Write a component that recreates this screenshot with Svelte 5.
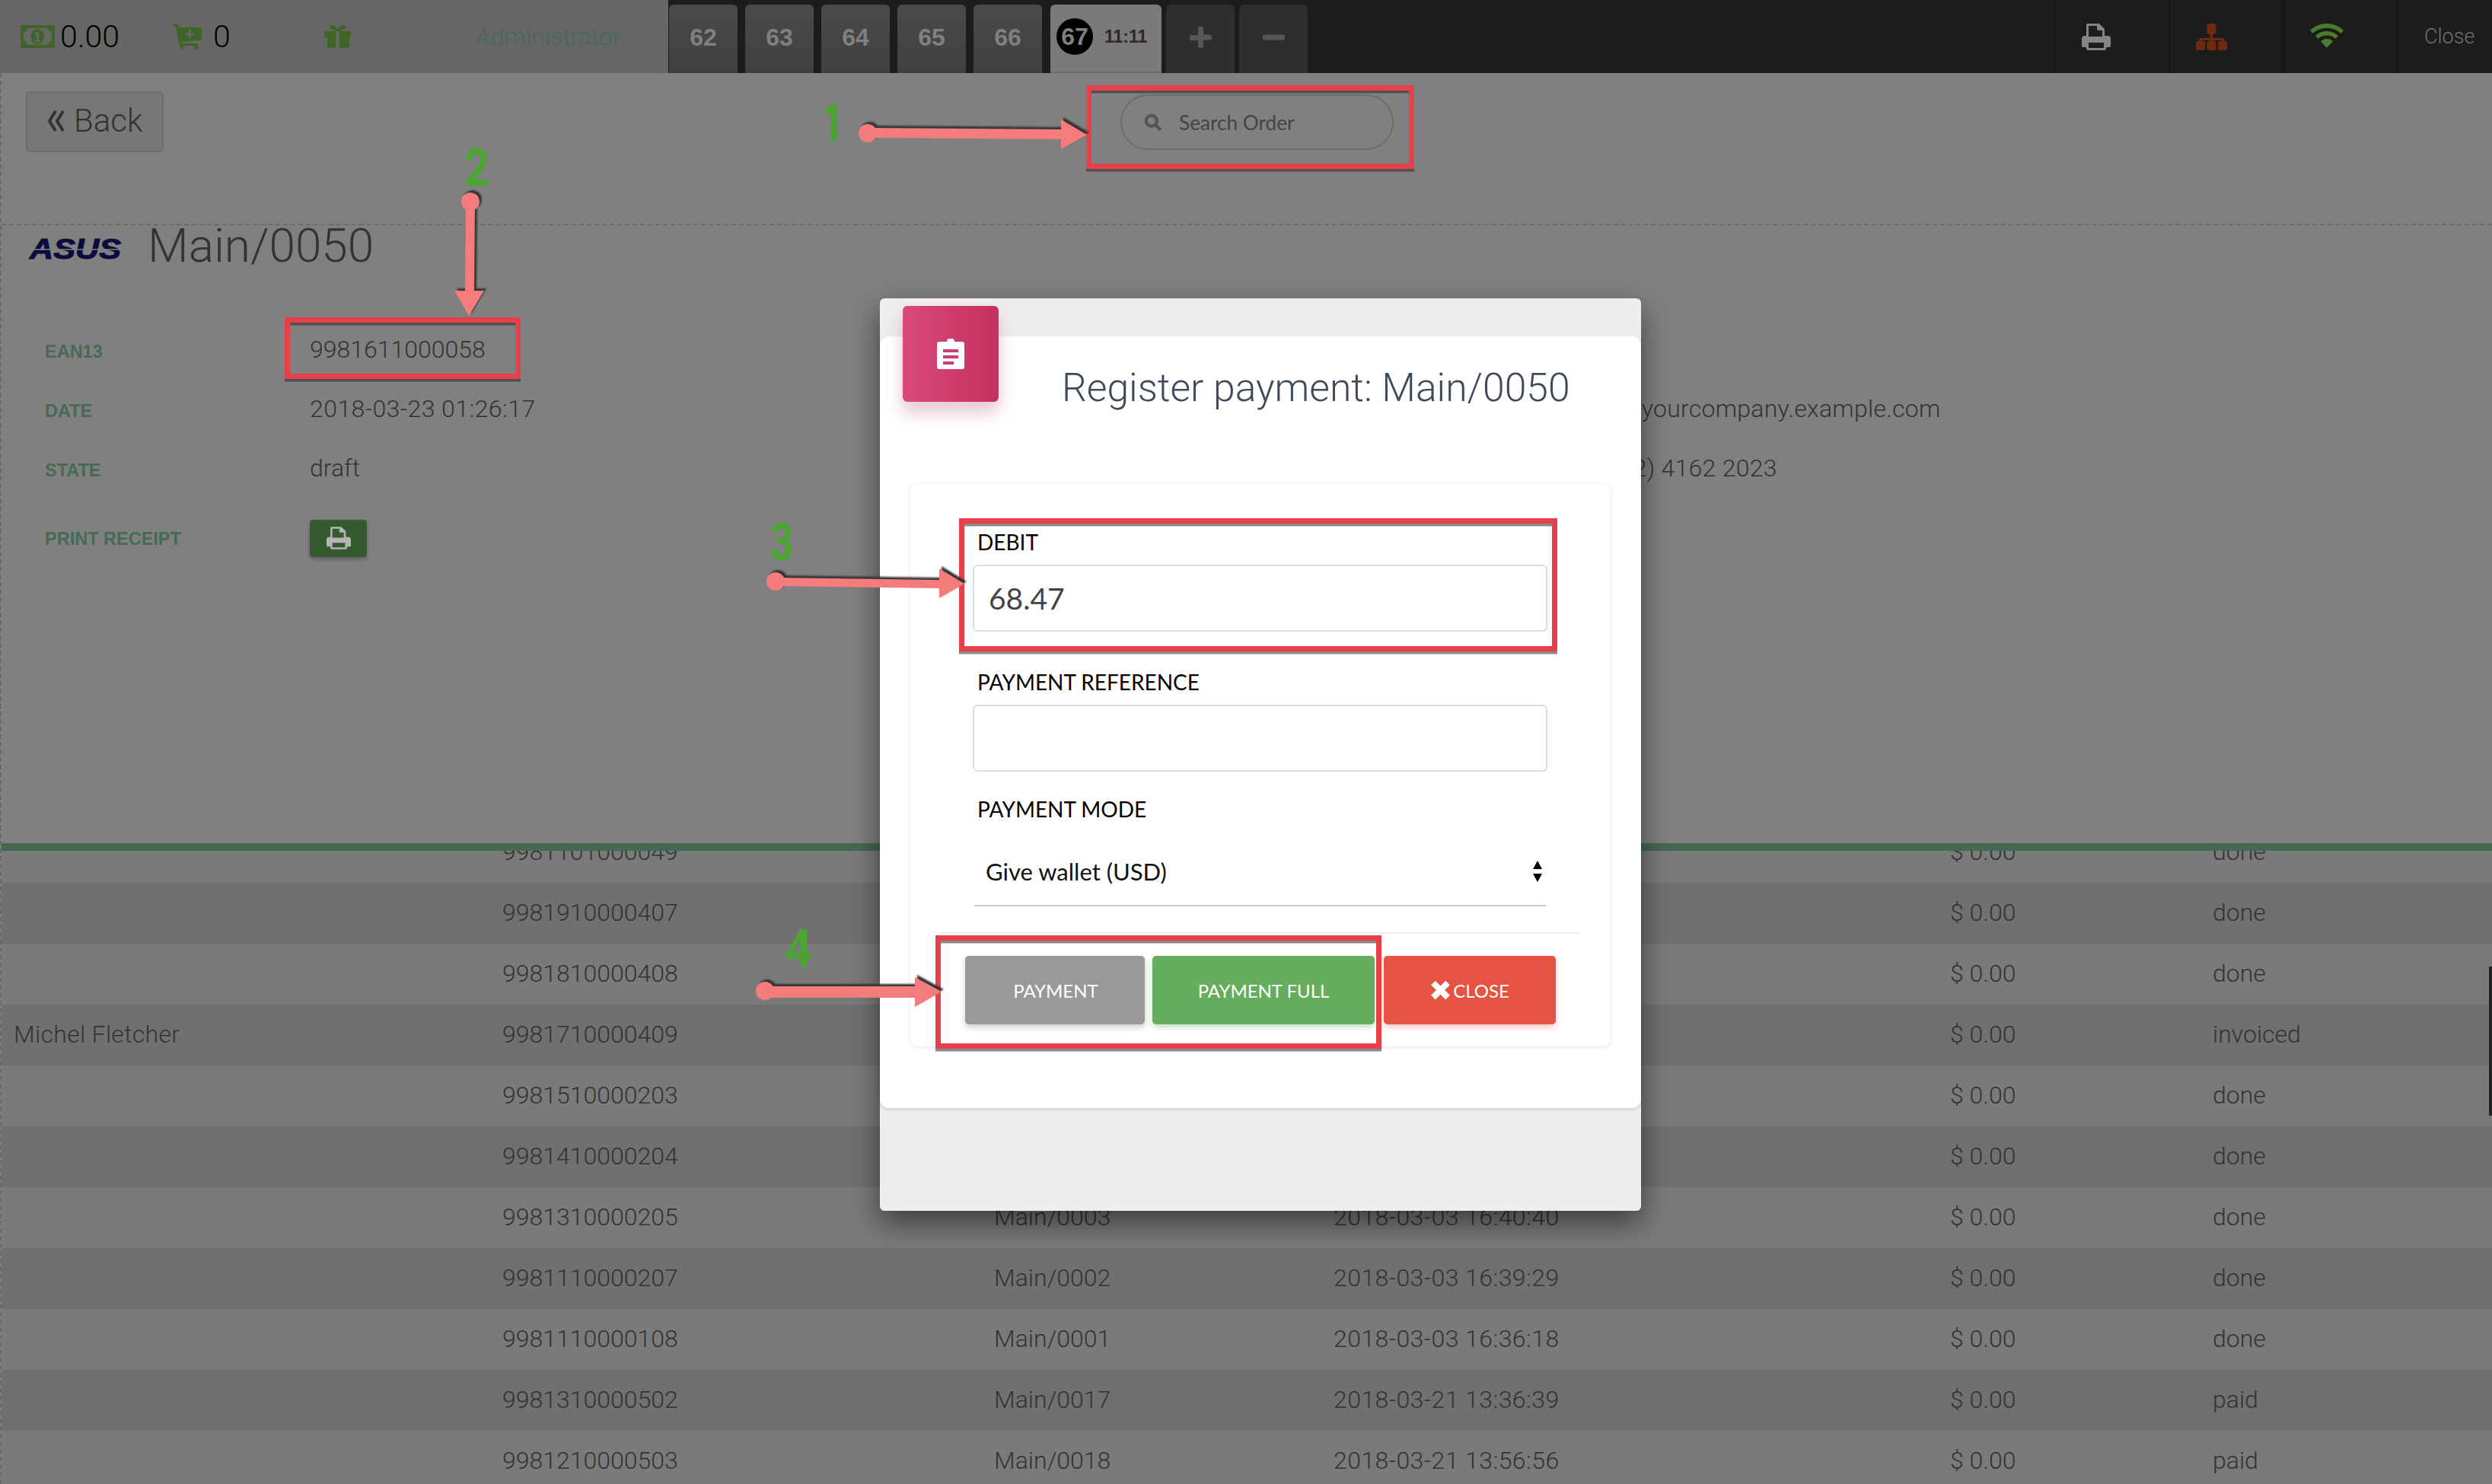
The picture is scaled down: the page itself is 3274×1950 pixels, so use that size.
<script lang="ts">
  interface Row {
    name: string;
    ean: string;
    ref: string;
    date: string;
    state: string;
  }

  const tabs = ["62", "63", "64", "65", "66"];

  const details = [
    { label: "EAN13", value: "9981611000058", extra: "" },
    { label: "DATE", value: "2018-03-23 01:26:17", extra: "info@yourcompany.example.com" },
    { label: "STATE", value: "draft", extra: "+32 (2) 4162 2023" }
  ];

  const rows: Row[] = [
    { name: "", ean: "9981101000049", ref: "", date: "", state: "done" },
    { name: "", ean: "9981910000407", ref: "", date: "", state: "done" },
    { name: "", ean: "9981810000408", ref: "", date: "", state: "done" },
    { name: "Michel Fletcher", ean: "9981710000409", ref: "", date: "", state: "invoiced" },
    { name: "", ean: "9981510000203", ref: "", date: "", state: "done" },
    { name: "", ean: "9981410000204", ref: "", date: "", state: "done" },
    { name: "", ean: "9981310000205", ref: "Main/0003", date: "2018-03-03 16:40:40", state: "done" },
    { name: "", ean: "9981110000207", ref: "Main/0002", date: "2018-03-03 16:39:29", state: "done" },
    { name: "", ean: "9981110000108", ref: "Main/0001", date: "2018-03-03 16:36:18", state: "done" },
    { name: "", ean: "9981310000502", ref: "Main/0017", date: "2018-03-21 13:36:39", state: "paid" },
    { name: "", ean: "9981210000503", ref: "Main/0018", date: "2018-03-21 13:56:56", state: "paid" }
  ];

  // red highlight frames, outer box in page pixels
  const frames = [
    { x: 1427, y: 112, w: 431, h: 110 },
    { x: 374, y: 417, w: 310, h: 81 },
    { x: 1260, y: 681, w: 786, h: 175 },
    { x: 1229, y: 1229, w: 586, h: 149 }
  ];

  const arrows = [
    { cx: 1140, cy: 175, points: "1140,168 1394,170 1394,157 1428,177 1394,196 1394,183 1140,181" },
    { cx: 618, cy: 265, points: "612,265 624,265 623,382 636,382 616,415 597,382 611,382" },
    { cx: 1019, cy: 764, points: "1019,759 1234,762 1234,747 1267,767 1234,786 1234,773 1019,770" },
    { cx: 1005, cy: 1302, points: "1005,1296 1202,1296 1202,1284 1237,1303 1202,1323 1202,1311 1005,1311" }
  ];

  const marks = [
    { text: "1", x: 1080, y: 185, w: 28 },
    { text: "2", x: 610, y: 244, w: 33 },
    { text: "3", x: 1012, y: 736, w: 30 },
    { text: "4", x: 1031, y: 1270, w: 36 }
  ];
</script>

<div class="screen">
  <header class="nav">
    <div class="nav-left">
      <svg class="i-money" viewBox="0 0 45 30" aria-hidden="true">
        <path fill-rule="evenodd" d="M0 0h45v30H0z M9 4a5 5 0 0 1-5 5v12a5 5 0 0 1 5 5h27a5 5 0 0 1 5-5V9a5 5 0 0 1-5-5z" />
        <ellipse cx="22.500" cy="15" rx="9" ry="10" />
        <path d="M20 9h4v11h2v2h-7v-2h2v-7l-2 1v-2z" fill="#666" />
      </svg>
      <span class="balance">0.00</span>
      <svg class="i-cart" viewBox="0 0 38 33" aria-hidden="true">
        <path fill-rule="evenodd" d="M0 0h6a2 2 0 0 1 2 2l.5 2H38v15a2 2 0 0 1-2 2L12 22.500l.5 2.500H33v3H10a2 2 0 0 1-2-2L4 3H0z M21 7v4h-4v3h4v4h3v-4h4v-3h-4V7z" />
        <circle cx="12" cy="30" r="3" />
        <circle cx="31" cy="30" r="3" />
      </svg>
      <span class="cart-count">0</span>
      <svg class="i-gift" viewBox="0 0 35 30" aria-hidden="true">
        <path fill-rule="evenodd" d="M0 8h13V6C9 6 6 4 8 1c2-2 6-1 9.500 5C21-0 25-1 27 1c2 3-1 5-5 5v2h13v8h-2v12a2 2 0 0 1-2 2H6a2 2 0 0 1-2-2V16H2a2 2 0 0 1-2-2z M15 8v22h5V8z" />
      </svg>
      <span class="user">Administrator</span>
    </div>

    <div class="tabs">
      {#each tabs as tab (tab)}
        <span class="tab">{tab}</span>
      {/each}
      <span class="tab active"><b>67</b><small>11:11</small></span>
      <span class="tab tool">
        <svg viewBox="0 0 29 28" aria-hidden="true"><path d="M11 2a2 2 0 0 1 2-2h3a2 2 0 0 1 2 2v8.500h9a2 2 0 0 1 2 2v3a2 2 0 0 1-2 2h-9V26a2 2 0 0 1-2 2h-3a2 2 0 0 1-2-2v-8H2a2 2 0 0 1-2-2v-3a2 2 0 0 1 2-2h9z" /></svg>
      </span>
      <span class="tab tool minus">
        <svg viewBox="0 0 29 28" aria-hidden="true"><rect y="10.500" width="29" height="7" rx="2" /></svg>
      </span>
    </div>

    <div class="nav-right">
      <span class="nav-cell">
        <svg class="i-print" viewBox="0 0 38 35" aria-hidden="true">
          <path fill-rule="evenodd" d="M8 0h15l7 7v9h4a4 4 0 0 1 4 4v9a2 2 0 0 1-2 2h-4v2a2 2 0 0 1-2 2H8a2 2 0 0 1-2-2v-2H2a2 2 0 0 1-2-2v-9a4 4 0 0 1 4-4h2V2a2 2 0 0 1 2-2z M9 3v14h18V9h-5a2 2 0 0 1-2-2V3z M9 25v7h20v-7z" />
        </svg>
      </span>
      <span class="nav-cell">
        <svg class="i-map" viewBox="0 0 41 35" aria-hidden="true">
          <rect x="14.500" width="12" height="14" rx="3" />
          <rect y="23" width="12" height="12" rx="3" />
          <rect x="14.500" y="23" width="12" height="12" rx="3" />
          <rect x="29" y="23" width="12" height="12" rx="3" />
          <path d="M19 14h3v5h13a2 2 0 0 1 2 2v3h-3v-2H22v2h-3v-2H7v2H4v-3a2 2 0 0 1 2-2h13z" />
        </svg>
      </span>
      <span class="nav-cell">
        <svg class="i-wifi" viewBox="0 0 44 32" aria-hidden="true">
          <path d="M22 0c8 0 16 3 22 9l-3.500 4C35.500 8.500 29 6 22 6S8.500 8.500 3.500 13L0 9C6 3 14 0 22 0z" />
          <path d="M22 10c6 0 11 2 15 6l-3.500 4c-3-3-7-4.500-11.500-4.500S13.500 17 10.500 20L7 16c4-4 9-6 15-6z" />
          <path d="M22 20c3 0 6 1 8 3.500L26.500 27 22 32l-4.500-5-3.500-3.500c2-2.500 5-3.500 8-3.500z" />
        </svg>
      </span>
      <span class="nav-cell close-cell">Close</span>
    </div>
  </header>

  <main class="page">
    <section class="top">
      <span class="back">
        <svg viewBox="0 0 23 32" aria-hidden="true"><path d="M11 3L3 16l8 13M21 3l-8 13 8 13" /></svg>
        Back
      </span>
      <span class="search">
        <svg viewBox="0 0 22 22" aria-hidden="true"><circle cx="9" cy="9" r="6.500" /><path d="M14 14l6 6" /></svg>
        Search Order
      </span>
    </section>

    <section class="order">
      <svg class="logo" viewBox="0 0 122 28" role="img" aria-label="ASUS">
        <text x="0" y="26" textLength="120" lengthAdjust="spacingAndGlyphs">ASUS</text>
        <rect y="13" width="122" height="1.500" />
      </svg>
      <h1>Main/0050</h1>
    </section>

    <section class="details">
      {#each details as item (item.label)}
        <span class="key">{item.label}</span>
        <span class="val" class:stamp={item.label === "DATE"}>{item.value}</span>
        <span class="val extra">{item.extra}</span>
      {/each}
      <span class="key">PRINT RECEIPT</span>
      <span class="print-btn">
        <svg viewBox="0 0 38 35" aria-hidden="true">
          <path fill-rule="evenodd" d="M8 0h15l7 7v9h4a4 4 0 0 1 4 4v9a2 2 0 0 1-2 2h-4v2a2 2 0 0 1-2 2H8a2 2 0 0 1-2-2v-2H2a2 2 0 0 1-2-2v-9a4 4 0 0 1 4-4h2V2a2 2 0 0 1 2-2z M9 3v14h18V9h-5a2 2 0 0 1-2-2V3z M9 25v7h20v-7z" />
        </svg>
      </span>
    </section>

    <section class="table">
      <div class="rows">
        {#each rows as row, index (row.ean + index)}
          <div class="row">
            <span class="name">{row.name}</span>
            <span>{row.ean}</span>
            <span>{row.ref}</span>
            <span class="stamp">{row.date}</span>
            <span>$ 0.00</span>
            <span>{row.state}</span>
          </div>
        {/each}
      </div>
    </section>
  </main>

  <span class="scroll-thumb"></span>

  <div class="modal">
    <span class="badge">
      <svg viewBox="0 0 36 40" aria-hidden="true">
        <path fill-rule="evenodd" d="M3 4h10a5 5 0 0 1 10 0h10a3 3 0 0 1 3 3v30a3 3 0 0 1-3 3H3a3 3 0 0 1-3-3V7a3 3 0 0 1 3-3z M8 14v4h20v-4z M8 22v4h20v-4z M8 30v4h14v-4z" />
      </svg>
    </span>
    <div class="sheet">
      <h2>Register payment: Main/0050</h2>
      <div class="card">
        <div class="form">
          <label for="debit">DEBIT</label>
          <input id="debit" value="68.47" />
          <label class="next" for="reference">PAYMENT REFERENCE</label>
          <input id="reference" value="" />
          <span class="mode-label">PAYMENT MODE</span>
          <div class="select">
            <span>Give wallet (USD)</span>
            <svg viewBox="0 0 14 28" aria-hidden="true"><path d="M7 0l6 11H1zM7 28L1 17h12z" /></svg>
          </div>
        </div>
        <div class="footer">
          <button class="grey">PAYMENT</button>
          <button class="green">PAYMENT FULL</button>
          <button class="red">
            <svg viewBox="0 0 24 24" aria-hidden="true"><path d="M1 6l5-5 6 6 6-6 5 5-6 6 6 6-5 5-6-6-6 6-5-5 6-6z" /></svg>
            CLOSE
          </button>
        </div>
      </div>
    </div>
  </div>

  <svg class="notes" viewBox="0 0 3274 1950" aria-hidden="true">
    {#each frames as f (f.x)}
      <rect class="frame-shade" x={f.x + 3.5} y={f.y + 7} width={f.w - 7} height={f.h - 7} />
      <rect class="frame" x={f.x + 3.5} y={f.y + 3.5} width={f.w - 7} height={f.h - 7} />
    {/each}
    {#each arrows as a (a.cx)}
      <g class="arrow-shade" transform="translate(3 -3)">
        <polygon points={a.points} />
        <ellipse cx={a.cx} cy={a.cy} rx="12" ry="12" />
      </g>
      <g class="arrow">
        <polygon points={a.points} />
        <ellipse cx={a.cx} cy={a.cy} rx="12" ry="12" />
      </g>
    {/each}
    {#each marks as m (m.text)}
      <text class="mark" x={m.x} y={m.y} textLength={m.w} lengthAdjust="spacingAndGlyphs">{m.text}</text>
    {/each}
  </svg>
</div>

<style>
  :global(body) {
    margin: 0;
    background: #808080;
  }

  .screen {
    position: relative;
    width: 3274px;
    height: 1950px;
    overflow: hidden;
    background: #808080;
    color: #333;
    font-family: Roboto, "Liberation Sans", sans-serif;
    font-weight: 300;
    font-size: 32px;
  }

  .nav {
    height: 96px;
    display: flex;
    background: #1c1c1c;
  }

  .nav-left {
    width: 878px;
    display: flex;
    align-items: center;
    background: #666;
    box-sizing: border-box;
    padding-left: 27px;
  }

  .i-money {
    width: 45px;
    height: 30px;
    fill: #3f6526;
  }

  .balance {
    margin-left: 7px;
    color: #000;
    font-size: 41px;
  }

  .i-cart {
    width: 38px;
    height: 33px;
    margin-left: 70px;
    fill: #3f6526;
  }

  .cart-count {
    margin-left: 15px;
    color: #000;
    font-size: 41px;
  }

  .i-gift {
    width: 35px;
    height: 30px;
    margin-left: 123px;
    fill: #3f6526;
  }

  .user {
    margin-left: 164px;
    color: #476a55;
    font-size: 32px;
  }

  .tabs {
    display: flex;
    gap: 10px;
    padding: 6px 0 0 1px;
  }

  .tab {
    width: 90px;
    box-sizing: border-box;
    padding-bottom: 4px;
    display: flex;
    align-items: center;
    justify-content: center;
    border-radius: 6px 6px 0 0;
    background: linear-gradient(#4a4a4a, #404040);
    color: #808080;
    font-family: "Liberation Sans", sans-serif;
    font-weight: 700;
    font-size: 32px;
  }

  .tab.active {
    width: 146px;
    gap: 15px;
    justify-content: flex-start;
    padding-left: 8px;
    background: #7a7a7a;
    border-bottom: 2px solid #6a6a6a;
    margin: 0 -4px 0 1px;
  }

  .tab.active b {
    width: 48px;
    height: 48px;
    display: flex;
    align-items: center;
    justify-content: center;
    border-radius: 50%;
    background: #000;
  }

  .tab.active small {
    color: #2a2a2a;
    font-size: 23px;
  }

  .tab.tool {
    background: #2e2e2e;
  }

  .tab.minus {
    margin-left: -4px;
  }

  .tab.tool svg {
    width: 29px;
    height: 28px;
    fill: #565656;
  }

  .nav-right {
    margin-left: auto;
    display: flex;
  }

  .nav-cell {
    width: 150px;
    box-sizing: border-box;
    display: flex;
    align-items: center;
    padding-left: 34px;
    border-left: 2px solid #161616;
  }

  .close-cell {
    width: 125px;
    color: #707070;
    font-size: 27px;
  }

  .i-print {
    width: 38px;
    height: 35px;
    fill: #858585;
  }

  .i-map {
    width: 41px;
    height: 35px;
    fill: #6f2a10;
  }

  .i-wifi {
    width: 44px;
    height: 32px;
    margin-bottom: 3px;
    fill: #4a7a2a;
  }

  .page {
    border-left: 2px dashed #6b6b6b;
  }

  .top {
    height: 200px;
    box-sizing: border-box;
    padding: 24px 0 0 32px;
    display: flex;
    align-items: flex-start;
    border-bottom: 2px dashed #6b6b6b;
  }

  .back {
    width: 181px;
    height: 80px;
    box-sizing: border-box;
    display: flex;
    align-items: center;
    gap: 12px;
    padding: 0 0 3px 26px;
    border: 2px solid #6c6c6c;
    border-radius: 6px;
    background: #777;
    font-size: 42px;
  }

  .back svg {
    width: 23px;
    height: 32px;
    fill: none;
    stroke: #333;
    stroke-width: 4;
  }

  .search {
    width: 359px;
    height: 73px;
    margin: 4px 0 0 1257px;
    box-sizing: border-box;
    display: flex;
    align-items: center;
    gap: 22px;
    padding-left: 29px;
    border: 2px solid #6c6c6c;
    border-radius: 37px;
    color: #454545;
    font-family: Lato, sans-serif;
    font-weight: 400;
    font-size: 26.200px;
  }

  .search svg {
    width: 24px;
    height: 24px;
    fill: none;
    stroke: #555;
    stroke-width: 4;
  }

  .order {
    height: 48px;
    margin-bottom: 78px;
    display: flex;
    align-items: center;
    padding-left: 37px;
    gap: 33px;
  }

  .logo {
    width: 122px;
    height: 28px;
    margin-top: 16px;
    overflow: visible;
  }

  .logo text {
    fill: #0b0b3d;
    stroke: #0b0b3d;
    stroke-width: 1;
    font-family: "Liberation Sans", sans-serif;
    font-weight: 700;
    font-style: italic;
    font-size: 36px;
  }

  .logo rect {
    fill: #808080;
  }

  h1 {
    margin: 6px 0 0;
    font-size: 62px;
    font-weight: 300;
    line-height: 76px;
  }

  .details {
    height: 686px;
    box-sizing: border-box;
    padding-left: 57px;
    display: grid;
    grid-template-columns: 348px 1666px 1fr;
    grid-template-rows: 78px 78px 78px 102px;
    align-items: center;
  }

  .key {
    margin-top: 2px;
    color: #476a55;
    font-family: "Liberation Sans", sans-serif;
    font-weight: 700;
    font-size: 23.500px;
  }

  .val {
    margin-bottom: 4px;
  }

  .extra {
    letter-spacing: 0.25px;
  }

  .stamp {
    letter-spacing: 0.45px;
  }

  .print-btn {
    width: 75px;
    height: 49px;
    display: flex;
    align-items: center;
    justify-content: center;
    border-radius: 4px;
    background: #355a30;
    box-shadow: 0 3px 5px rgba(0, 0, 0, 0.25);
  }

  .print-btn svg {
    width: 32px;
    height: 30px;
    fill: #b5b5b5;
  }

  .table {
    height: 842px;
    overflow: hidden;
    border-top: 10px solid #466853;
  }

  .rows {
    margin-top: -38px;
  }

  .row {
    height: 80px;
    box-sizing: border-box;
    padding: 0 0 3px 16px;
    display: grid;
    grid-template-columns: 642px 646px 446px 810px 345px 1fr;
    align-items: center;
    background: #7a7a7a;
  }

  .row:nth-child(even) {
    background: #707070;
  }

  .name {
    letter-spacing: 0.3px;
  }

  .scroll-thumb {
    position: absolute;
    right: 0;
    top: 1270px;
    width: 4px;
    height: 196px;
    background: #222;
  }

  .modal {
    position: absolute;
    left: 1156px;
    top: 392px;
    width: 1000px;
    height: 1199px;
    box-sizing: border-box;
    padding-top: 50px;
    border-radius: 6px;
    background: #efedee;
    box-shadow: 0 16px 38px rgba(0, 0, 0, 0.5);
  }

  .badge {
    position: absolute;
    left: 30px;
    top: 10px;
    width: 126px;
    height: 126px;
    display: flex;
    align-items: center;
    justify-content: center;
    border-radius: 6px;
    background: linear-gradient(90deg, #d84a78, #c6305f);
    box-shadow: 0 14px 22px rgba(160, 50, 90, 0.28);
  }

  .badge svg {
    width: 36px;
    height: 40px;
    fill: #fff;
  }

  .sheet {
    height: 1014px;
    box-sizing: border-box;
    padding: 38px 40px 0;
    border-radius: 12px;
    background: #fff;
    box-shadow: 0 2px 4px rgba(0, 0, 0, 0.14);
  }

  h2 {
    height: 60px;
    margin: 0 0 96px 199px;
    color: #3f4a5a;
    font-size: 51.600px;
    font-weight: 300;
    line-height: 60px;
    white-space: nowrap;
  }

  .card {
    height: 739px;
    border-radius: 10px;
    background: #fff;
    box-shadow: 0 1px 5px rgba(0, 0, 0, 0.12);
  }

  .form {
    height: 589px;
    box-sizing: border-box;
    padding: 60px 83px 0 82px;
    font-family: Lato, sans-serif;
    font-weight: 400;
    color: #000;
  }

  label,
  .mode-label {
    display: block;
    height: 32px;
    margin: 0 0 14px 6px;
    font-size: 28px;
    line-height: 32px;
  }

  .next {
    margin-top: 50px;
  }

  .mode-label {
    margin: 33px 0 22px 6px;
  }

  input {
    width: 100%;
    height: 88px;
    box-sizing: border-box;
    display: block;
    padding: 0 19px;
    border: 2px solid #ddd;
    border-radius: 6px;
    background: #fff;
    color: #444;
    font-family: Lato, sans-serif;
    font-size: 39px;
    outline: 0;
  }

  .select {
    height: 90px;
    margin: 0 2px;
    box-sizing: border-box;
    display: flex;
    align-items: center;
    justify-content: space-between;
    padding: 0 4px 0 15px;
    border-bottom: 2px solid #ccc;
    font-size: 31px;
    color: #111;
  }

  .select svg {
    width: 14px;
    height: 28px;
  }

  .footer {
    margin: 0 40px;
    height: 150px;
    box-sizing: border-box;
    padding: 29px 0 0 32px;
    display: flex;
    gap: 10px;
    border-top: 2px solid #eee;
  }

  button {
    height: 90px;
    padding: 0;
    display: flex;
    align-items: center;
    justify-content: center;
    gap: 3px;
    border: 0;
    border-radius: 5px;
    color: #fff;
    font-family: Lato, sans-serif;
    font-size: 24px;
  }

  .grey {
    width: 236px;
    padding-left: 2px;
    background: #999;
    box-shadow: 0 4px 8px rgba(0, 0, 0, 0.2);
  }

  .green {
    width: 292px;
    background: #66ad5e;
    box-shadow: 0 4px 8px rgba(76, 150, 70, 0.3);
  }

  .red {
    width: 226px;
    margin-left: 2px;
    background: #e55442;
    box-shadow: 0 4px 8px rgba(220, 70, 50, 0.3);
  }

  .red svg {
    width: 27px;
    height: 30px;
    fill: #fff;
  }

  .notes {
    position: absolute;
    left: 0;
    top: 0;
    width: 3274px;
    height: 1950px;
    pointer-events: none;
  }

  .frame {
    fill: none;
    stroke: #e8404a;
    stroke-width: 7;
  }

  .frame-shade {
    fill: none;
    stroke: rgba(40, 40, 40, 0.55);
    stroke-width: 7;
  }

  .arrow {
    fill: #f47c7c;
  }

  .arrow-shade {
    fill: #333;
    filter: blur(1px);
  }

  .mark {
    fill: #4aa531;
    font-family: Roboto, sans-serif;
    font-weight: 700;
    font-size: 68px;
  }
</style>
